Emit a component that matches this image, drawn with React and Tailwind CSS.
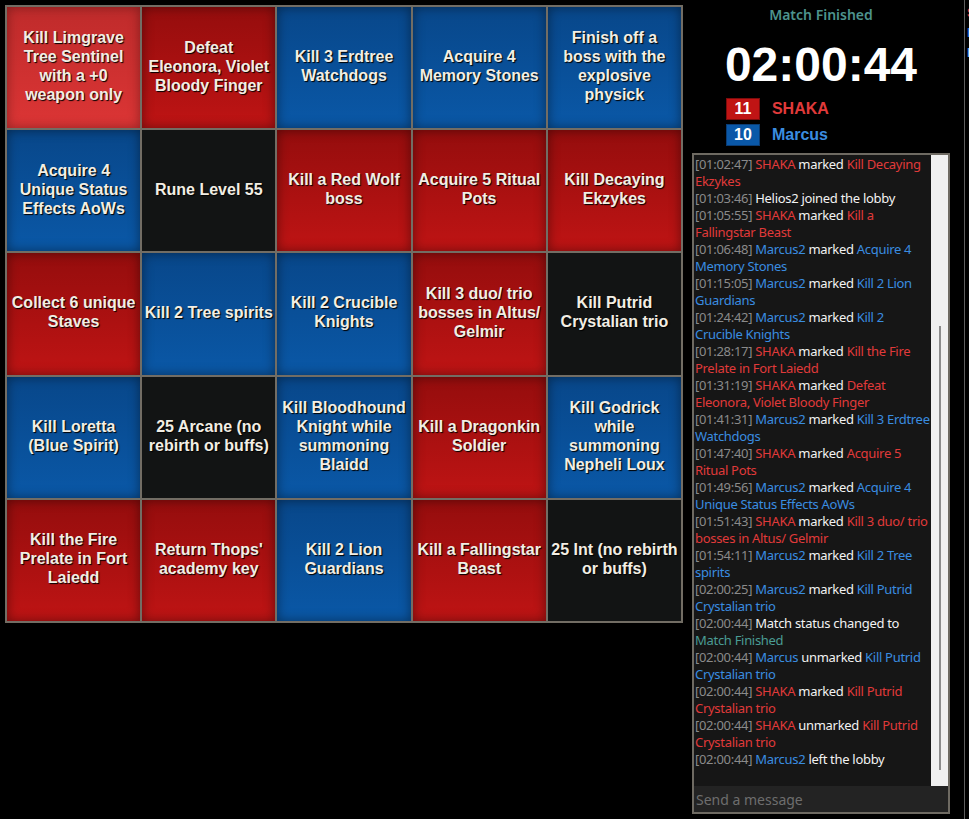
import React from "react";

const RED = "red";
const BLUE = "blue";
const BLACK = "black";
const HOVER = "hover";

const board = [
  [HOVER, "Kill Limgrave\nTree Sentinel\nwith a +0\nweapon only"],
  [RED, "Defeat\nEleonora, Violet\nBloody Finger"],
  [BLUE, "Kill 3 Erdtree\nWatchdogs"],
  [BLUE, "Acquire 4\nMemory Stones"],
  [BLUE, "Finish off a\nboss with the\nexplosive\nphysick"],
  [BLUE, "Acquire 4\nUnique Status\nEffects AoWs"],
  [BLACK, "Rune Level 55"],
  [RED, "Kill a Red Wolf\nboss"],
  [RED, "Acquire 5 Ritual\nPots"],
  [RED, "Kill Decaying\nEkzykes"],
  [RED, "Collect 6 unique\nStaves"],
  [BLUE, "Kill 2 Tree spirits"],
  [BLUE, "Kill 2 Crucible\nKnights"],
  [RED, "Kill 3 duo/ trio\nbosses in Altus/\nGelmir"],
  [BLACK, "Kill Putrid\nCrystalian trio"],
  [BLUE, "Kill Loretta\n(Blue Spirit)"],
  [BLACK, "25 Arcane (no\nrebirth or buffs)"],
  [BLUE, "Kill Bloodhound\nKnight while\nsummoning\nBlaidd"],
  [RED, "Kill a Dragonkin\nSoldier"],
  [BLUE, "Kill Godrick\nwhile\nsummoning\nNepheli Loux"],
  [RED, "Kill the Fire\nPrelate in Fort\nLaiedd"],
  [RED, "Return Thops'\nacademy key"],
  [BLUE, "Kill 2 Lion\nGuardians"],
  [RED, "Kill a Fallingstar\nBeast"],
  [BLACK, "25 Int (no rebirth\nor buffs)"],
];

const cellBg = {
  [RED]: "bg-gradient-to-b from-[#950d0d] to-[#bf1414] shadow-[inset_0_0_12px_rgba(0,0,0,0.45)]",
  [BLUE]: "bg-gradient-to-b from-[#08478a] to-[#0a58a7] shadow-[inset_0_0_12px_rgba(0,0,0,0.45)]",
  [BLACK]: "bg-[#121414]",
  [HOVER]: "bg-gradient-to-b from-[#bf2b2b] to-[#dc3535] shadow-[inset_0_0_12px_rgba(0,0,0,0.35)]",
};

// chat log, already scrolled to the bottom
const log = [
  ["01:02:47", "SHAKA", "marked", "Kill Decaying Ekzykes", RED],
  ["01:03:46", null, "Helios2 joined the lobby", null, null],
  ["01:05:55", "SHAKA", "marked", "Kill a Fallingstar Beast", RED],
  ["01:06:48", "Marcus2", "marked", "Acquire 4 Memory Stones", BLUE],
  ["01:15:05", "Marcus2", "marked", "Kill 2 Lion Guardians", BLUE],
  ["01:24:42", "Marcus2", "marked", "Kill 2 Crucible Knights", BLUE],
  ["01:28:17", "SHAKA", "marked", "Kill the Fire Prelate in Fort Laiedd", RED],
  ["01:31:19", "SHAKA", "marked", "Defeat Eleonora, Violet Bloody Finger", RED],
  ["01:41:31", "Marcus2", "marked", "Kill 3 Erdtree Watchdogs", BLUE],
  ["01:47:40", "SHAKA", "marked", "Acquire 5 Ritual Pots", RED],
  ["01:49:56", "Marcus2", "marked", "Acquire 4 Unique Status Effects AoWs", BLUE],
  ["01:51:43", "SHAKA", "marked", "Kill 3 duo/ trio bosses in Altus/ Gelmir", RED],
  ["01:54:11", "Marcus2", "marked", "Kill 2 Tree spirits", BLUE],
  ["02:00:25", "Marcus2", "marked", "Kill Putrid Crystalian trio", BLUE],
  ["02:00:44", null, "Match status changed to", "Match Finished", "status"],
  ["02:00:44", "Marcus", "unmarked", "Kill Putrid Crystalian trio", BLUE],
  ["02:00:44", "SHAKA", "marked", "Kill Putrid Crystalian trio", RED],
  ["02:00:44", "SHAKA", "unmarked", "Kill Putrid Crystalian trio", RED],
  ["02:00:44", "Marcus2", "left the lobby", null, BLUE],
];

const textColor = {
  [RED]: "text-[#e03a3a]",
  [BLUE]: "text-[#3a8de0]",
  status: "text-[#4a9c94]",
};

const Cell = ({ kind, text }) => (
  <div
    className={`flex items-center justify-center px-[2px] pb-[3px] text-center ${cellBg[kind]}`}
  >
    <span className="whitespace-pre font-['Liberation_Sans',Arial,sans-serif] text-[16px] font-bold leading-[19px] text-[#f2eee4] [text-shadow:1px_1px_1px_#000]">
      {text}
    </span>
  </div>
);

const LogLine = ({ entry }) => {
  const [time, who, action, target, color] = entry;
  return (
    <div>
      <span className="text-[#8a8a8a]">[{time}]</span>{" "}
      {who && <span className={textColor[color]}>{who} </span>}
      <span className="text-[#f2f2f2]">{action}</span>
      {target && <span className={textColor[color]}> {target}</span>}
    </div>
  );
};

const ScoreRow = ({ score, name, color }) => (
  <div className="flex h-[22px] items-center leading-[20px]">
    <div
      className={`flex h-[22px] w-[34px] items-center justify-center border text-[16px] font-bold text-white ${
        color === RED
          ? "border-[#7d0c0c] bg-[#c01414]"
          : "border-[#0a3c74] bg-[#0a58a8]"
      }`}
    >
      {score}
    </div>
    <span
      className={`ml-[12px] text-[16px] font-bold ${
        color === RED ? "text-[#e03a3a]" : "text-[#3a8de0]"
      }`}
    >
      {name}
    </span>
  </div>
);

export default function App() {
  return (
    <div className="flex h-[819px] w-[969px] overflow-hidden bg-black font-['Liberation_Sans',Arial,sans-serif]">
      {/* Bingo board */}
      <div className="pl-[5px] pt-[5px]">
        <div className="grid h-[618px] w-[678px] grid-cols-5 grid-rows-5 gap-[2px] bg-[#726d64] p-[2px]">
          {board.map(([kind, text], i) => (
            <Cell key={i} kind={kind} text={text} />
          ))}
        </div>
      </div>

      {/* Match info + chat */}
      <div className="ml-[9px] flex w-[258px] flex-col">
        <div className="pt-[5px] text-center font-['Noto_Sans',sans-serif] text-[14px] font-semibold leading-[20px] text-[#4d938d]">
          Match Finished
        </div>
        <div className="mx-auto mt-[12px] w-fit">
          <div className="text-[48px] font-bold leading-[56px] text-white">
            02:00:44
          </div>
          <div className="mt-[5px] flex flex-col gap-[4px] pl-[1px]">
            <ScoreRow score="11" name="SHAKA" color={RED} />
            <ScoreRow score="10" name="Marcus" color={BLUE} />
          </div>
        </div>

        <div className="mt-[7px] flex h-[661px] flex-col border-2 border-[#6e6a62] bg-[#161616]">
          <div className="flex min-h-0 flex-1">
            <div className="flex-1 overflow-hidden pl-[1px] pt-[1px] font-['Noto_Sans',sans-serif] text-[13px] leading-[17px] tracking-[-0.3px]">
              {log.map((entry, i) => (
                <LogLine key={i} entry={entry} />
              ))}
            </div>
            <div className="flex w-[17px] flex-col bg-[#f0f0f0] pt-[171px]">
              <div className="mx-auto h-[444px] w-[2px] bg-[#8c8c8c]" />
            </div>
          </div>
          <input
            className="h-[26px] w-full bg-[#232323] px-[2px] font-['Noto_Sans',sans-serif] text-[14px] text-white outline-none placeholder:text-[#6e6e6e]"
            placeholder="Send a message"
          />
        </div>
      </div>

      {/* edge of the next panel */}
      <div className="ml-[14px] h-full w-[5px] overflow-hidden border-l border-[#5e5e5e] pl-[2px] pt-[3px] text-[13px] font-bold leading-[20px]">
        <div className="text-[#e03a3a]">SHAKA</div>
        <div className="text-[#1f6fd0]">Marcus</div>
        <div className="text-[#5ea3e6]">Marcus2</div>
      </div>
    </div>
  );
}
